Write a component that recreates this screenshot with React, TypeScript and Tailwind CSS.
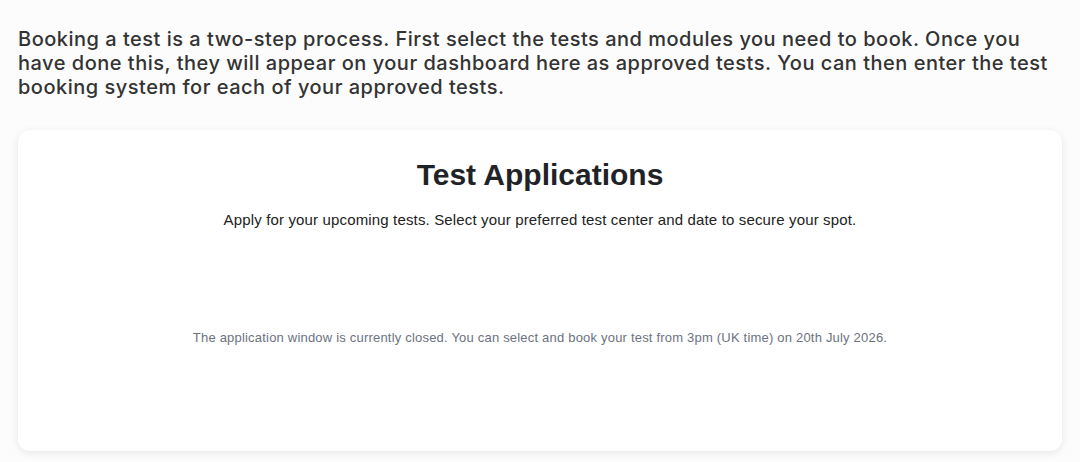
export default function App() {
  return (
    <div
      className="min-h-[462px] w-[1080px] bg-[#fcfcfc] px-[18px] pt-[27px] text-[#333333]"
      style={{ fontFamily: '"Liberation Sans", Arial, sans-serif' }}
    >
      <p className="text-[20px] font-medium leading-[24px] tracking-[0.5px] text-[#333333] [font-family:Inter,'Liberation_Sans',sans-serif]">
        Booking a test is a two-step process. First select the tests and modules you need to book. Once you
        have done this, they will appear on your dashboard here as approved tests. You can then enter the test
        booking system for each of your approved tests.
      </p>

      <section className="mt-[31px] flex h-[321px] flex-col items-center rounded-[12px] bg-white pt-[26px] shadow-[0_2px_8px_rgba(0,0,0,0.09)]">
        <h1 className="text-[30px] font-bold leading-[38px] text-[#1f2328]">Test Applications</h1>
        <p className="mt-[16px] text-[15px] leading-[20px] tracking-[0.15px] text-[#222222]">
          Apply for your upcoming tests. Select your preferred test center and date to secure your spot.
        </p>
        <p className="mt-[100px] text-[13px] leading-[16px] tracking-[0.2px] text-[#6b7280]">
          The application window is currently closed. You can select and book your test from 3pm (UK time) on 20th
          July 2026.
        </p>
      </section>
    </div>
  );
}
